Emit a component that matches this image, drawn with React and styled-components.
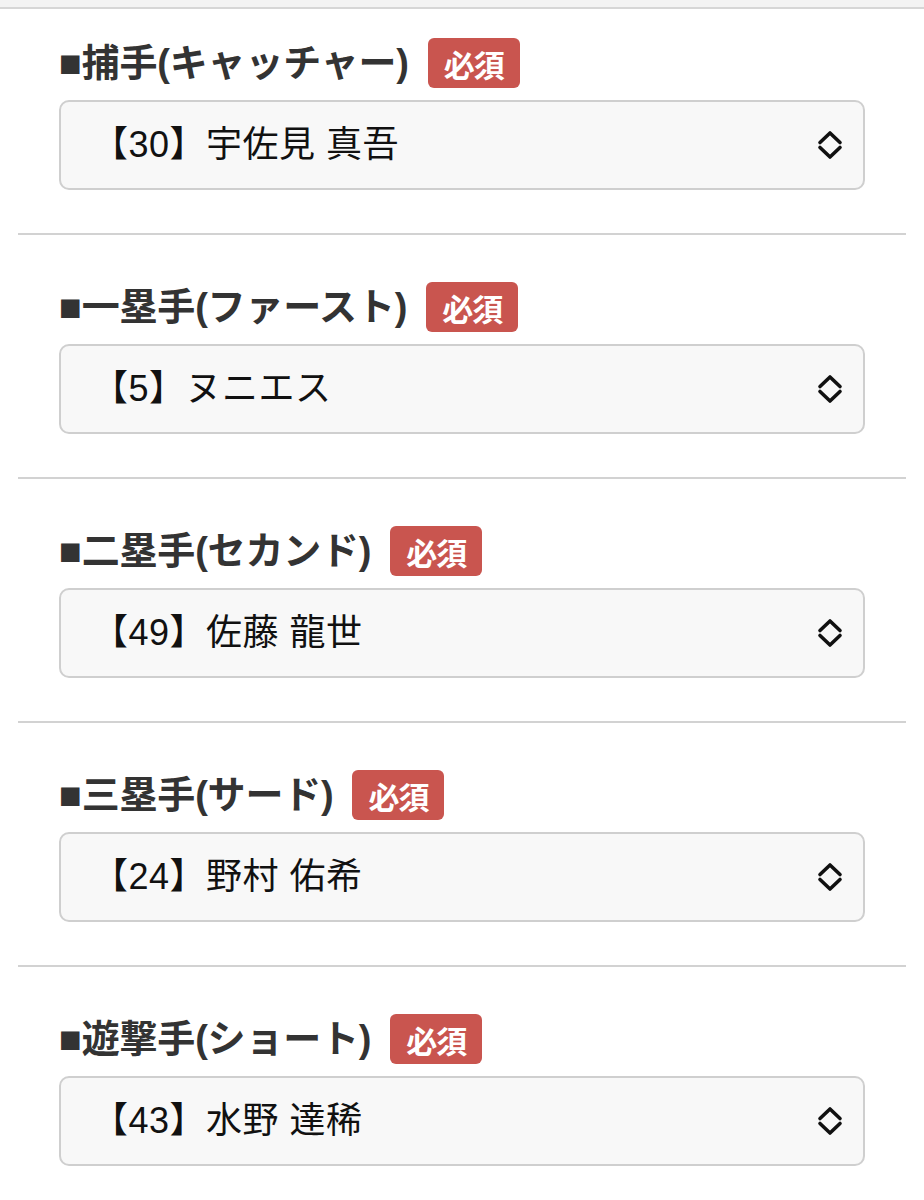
import React from "react";
import styled, { createGlobalStyle } from "styled-components";

const Global = createGlobalStyle`
  html, body { margin: 0; padding: 0; background: #fff; }
  body { font-family: "Liberation Sans", "Noto Sans CJK JP", sans-serif; }
`;

const TopBar = styled.div`
  height: 7px;
  background: #f3f3f3;
  border-bottom: 2px solid #d6d6d6;
`;

const List = styled.div`
  margin: 0 18px;
  display: flex;
  flex-direction: column;
`;

const Section = styled.section`
  padding: ${(p) => (p.$first ? "29px" : "47px")} 41px 43px;
  border-bottom: 2px solid #d2d2d2;
  display: flex;
  flex-direction: column;
  gap: 12px;
`;

const HeadRow = styled.div`
  display: flex;
  align-items: center;
  height: 50px;
  gap: 19px;
`;

const Title = styled.h2`
  margin: 0;
  font-size: 38px;
  font-weight: 700;
  color: #333;
  line-height: 1;
  letter-spacing: -0.2px;
`;

const Badge = styled.span`
  display: inline-flex;
  align-items: center;
  justify-content: center;
  width: 92px;
  height: 50px;
  box-sizing: border-box;
  border-radius: 6px;
  background: #c9554f;
  color: #fff;
  font-family: "Noto Sans CJK JP", sans-serif;
  font-weight: 700;
  font-size: 31px;
  letter-spacing: -1px;
`;

const SelectBox = styled.div`
  height: 90px;
  box-sizing: border-box;
  border: 2px solid #cfcfcf;
  border-radius: 10px;
  background: #f8f8f8;
  display: flex;
  align-items: center;
  justify-content: space-between;
  padding: 0 20px 0 31px;
  color: #111;
  font-size: 36px;
`;

const Value = styled.span`
  line-height: 1;
  letter-spacing: 0.5px;
`;

const Chevrons = () => (
  <svg width="26" height="30" viewBox="0 0 26 30" fill="none" stroke="#111" strokeWidth="3.6" strokeLinecap="round" strokeLinejoin="round">
    <path d="M3 12.5 L13 3 L23 12.5" />
    <path d="M3 17.5 L13 27 L23 17.5" />
  </svg>
);

const positions = [
  { title: "■捕手(キャッチャー)", value: "【30】宇佐見 真吾" },
  { title: "■一塁手(ファースト)", value: "【5】ヌニエス" },
  { title: "■二塁手(セカンド)", value: "【49】佐藤 龍世" },
  { title: "■三塁手(サード)", value: "【24】野村 佑希" },
  { title: "■遊撃手(ショート)", value: "【43】水野 達稀" },
];

export default function App() {
  return (
    <>
      <Global />
      <TopBar />
      <List>
        {positions.map((p, i) => (
          <Section key={p.title} $first={i === 0}>
            <HeadRow>
              <Title>{p.title}</Title>
              <Badge>必須</Badge>
            </HeadRow>
            <SelectBox>
              <Value>{p.value}</Value>
              <Chevrons />
            </SelectBox>
          </Section>
        ))}
      </List>
    </>
  );
}
